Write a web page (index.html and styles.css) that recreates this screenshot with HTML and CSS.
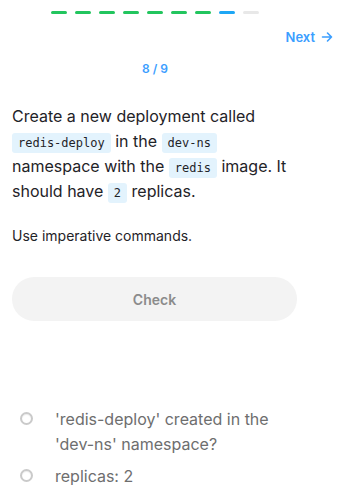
FILE: index.html
```html
<!DOCTYPE html>
<html lang="en">
<head>
  <meta charset="UTF-8">
  <meta name="viewport" content="width=device-width, initial-scale=1.0">
  <title>Task 8 of 9</title>
  <link rel="stylesheet" href="styles.css">
</head>
<body>
  <div class="page">
    <div class="column">
      <div class="progress">
        <span class="step done"></span>
        <span class="step done"></span>
        <span class="step done"></span>
        <span class="step done"></span>
        <span class="step done"></span>
        <span class="step done"></span>
        <span class="step done"></span>
        <span class="step current"></span>
        <span class="step"></span>
      </div>
    </div>

    <div class="nav">
      <a class="next" href="#">Next
        <svg width="12" height="12" viewBox="0 0 12 12" fill="none" stroke="currentColor" stroke-width="1.6" stroke-linecap="round" stroke-linejoin="round">
          <path d="M1.5 6h9M6.5 2l4 4-4 4"/>
        </svg>
      </a>
    </div>

    <div class="column">
      <p class="counter">8 / 9</p>

      <p class="task">
        Create a new deployment called <code>redis-deploy</code> in the <code>dev-ns</code>
        namespace with the <code>redis</code> image. It should have <code>2</code> replicas.
      </p>

      <p class="hint">Use imperative commands.</p>

      <button class="check-btn">Check</button>

      <ul class="checks">
        <li><span class="dot"></span><span>'redis-deploy' created in the 'dev-ns' namespace?</span></li>
        <li><span class="dot"></span><span>replicas: 2</span></li>
      </ul>
    </div>
  </div>
</body>
</html>
```

FILE: styles.css
```css
body {
  margin: 0;
  font-family: Inter, "Noto Sans", sans-serif;
  background: #fff;
  color: #1f2328;
}
.column {
  width: 310px;
  box-sizing: border-box;
  padding: 0 12px;
}
.progress {
  display: flex;
  justify-content: center;
  gap: 8px;
  padding-top: 11px;
}
.step {
  width: 16px;
  height: 3px;
  border-radius: 2px;
  background: #e8e8e8;
}
.step.done {
  background: #22c55e;
}
.step.current {
  background: #1ea7f5;
}
.nav {
  display: flex;
  justify-content: flex-end;
  padding: 15px 9px 0 0;
}
.next {
  display: flex;
  align-items: center;
  gap: 6px;
  color: #3b9eff;
  font-size: 13px;
  font-weight: 600;
  text-decoration: none;
}
.counter {
  margin: 16px 0 0;
  text-align: center;
  color: #3b9eff;
  font-size: 12px;
  font-weight: 600;
}
.task {
  margin: 28px 0 0;
  font-size: 16px;
  line-height: 25px;
}
.task code {
  display: inline-block;
  font-family: "DejaVu Sans Mono", monospace;
  font-size: 12px;
  line-height: 20px;
  background: #e3f3fd;
  color: #1f2328;
  padding: 0 6px;
  border-radius: 3px;
}
.hint {
  margin: 23px 0 0;
  font-size: 14px;
}
.check-btn {
  display: block;
  width: 285px;
  height: 44px;
  margin-top: 33px;
  border: none;
  border-radius: 22px;
  background: #f3f3f3;
  color: #8b8b8b;
  font-family: inherit;
  font-size: 14px;
  font-weight: 600;
}
.checks {
  list-style: none;
  margin: 86px 0 0;
  padding: 0 0 0 8px;
  color: #6e6e6e;
  font-size: 16px;
  line-height: 25px;
}
.checks li {
  display: flex;
  gap: 22px;
  margin-bottom: 7px;
}
.dot {
  flex: none;
  width: 9px;
  height: 9px;
  margin-top: 5px;
  border: 2px solid #cacaca;
  border-radius: 50%;
  box-shadow: inset 0 1px 1px rgba(0, 0, 0, 0.08);
}
```
